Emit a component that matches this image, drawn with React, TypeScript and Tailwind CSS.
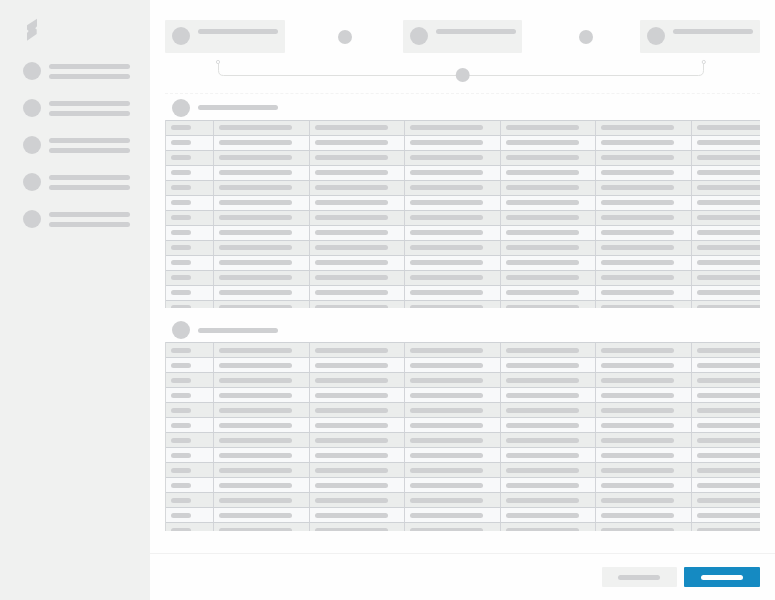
const navItems = [0, 1, 2, 3, 4];
const rows = Array.from({ length: 13 }, (_, i) => i);
const columns = [0, 1, 2, 3, 4, 5];

function Dot() {
  return <div className="size-[18px] shrink-0 rounded-full bg-[#cfd0d2]" />;
}

function Card() {
  return (
    <div className="flex h-[33px] gap-2 rounded-[1px] bg-[#f0f1f0] pt-[7px] pl-[6.6px]">
      <Dot />
      <div className="mt-[2px] h-[5px] w-[80.5px] rounded-full bg-[#cfd0d2]" />
    </div>
  );
}

function StepDot() {
  return <div className="mt-[10px] size-[14px] rounded-full bg-[#cfd0d2]" />;
}

function Connector() {
  return (
    <svg className="block h-[32px] w-[595px]" viewBox="165 57 595 32" fill="none">
      <path d="M218.5 64V70.5Q218.5 75.5 223.5 75.5H698.5Q703.5 75.5 703.5 70.5V64" stroke="#dfe0df" />
      <circle cx="218" cy="62" r="1.6" fill="#fff" stroke="#cfd0d2" strokeWidth=".8" />
      <circle cx="703.8" cy="62" r="1.6" fill="#fff" stroke="#cfd0d2" strokeWidth=".8" />
      <circle cx="462.7" cy="75" r="7" fill="#cfd0d2" />
    </svg>
  );
}

function Section() {
  return (
    <section>
      <div className="flex h-[18px] items-center gap-2 pl-[6.6px]">
        <Dot />
        <div className="h-[5px] w-[80.5px] rounded-full bg-[#cfd0d2]" />
      </div>
      <div className="mt-[3px] h-[188.5px] w-[595px] overflow-hidden border-l border-[#d6d8da]">
        {rows.map((row) => (
          <div
            key={row}
            className="flex h-[15px] w-[640px] border-t border-[#cfd2d6] odd:bg-[#ebedec] even:bg-[#f8f9fa]"
          >
            <div className="flex w-[48px] shrink-0 items-center border-r border-[#d2d4d8] pl-[5px]">
              <div className="h-[5px] w-[19.5px] rounded-full bg-[#cfd0d2]" />
            </div>
            {columns.map((column) => (
              <div
                key={column}
                className="flex w-[95.5px] shrink-0 items-center border-r border-[#d2d4d8] pl-[5px]"
              >
                <div className="h-[5px] w-[73px] rounded-full bg-[#cfd0d2]" />
              </div>
            ))}
          </div>
        ))}
      </div>
    </section>
  );
}

export default function App() {
  return (
    <div className="flex h-[600px] w-[775px] overflow-hidden bg-[#fefefe]">
      <aside className="w-[150px] shrink-0 bg-[#f0f1f0]">
        <svg className="mt-[18px] ml-[26px] block h-[24px] w-[12px]" viewBox="26 18 12 24">
          <path
            d="M37 18.8V26.2L35.2 28.2L36.7 29.5V34L27 40.7V33L28.7 31L27 29.5V25.3Z"
            fill="#cfd0d2"
          />
        </svg>
        <nav className="mt-5 flex flex-col gap-[19px] pl-[23px]">
          {navItems.map((item) => (
            <div key={item} className="flex h-[18px] items-center gap-2">
              <Dot />
              <div className="flex flex-col gap-[5px]">
                <div className="h-[5px] w-[81px] rounded-full bg-[#cfd0d2]" />
                <div className="h-[5px] w-[81px] rounded-full bg-[#cfd0d2]" />
              </div>
            </div>
          ))}
        </nav>
      </aside>
      <main className="flex min-w-0 flex-1 flex-col">
        <div className="h-[553px] pt-5 pl-[15px]">
          <div className="grid h-[37px] w-[595px] grid-cols-[120px_118px_119px_118px_120px]">
            <Card />
            <div className="pl-[53px]">
              <StepDot />
            </div>
            <Card />
            <div className="pl-[57px]">
              <StepDot />
            </div>
            <Card />
          </div>
          <Connector />
          <div className="mt-1 w-[595px] border-t border-dashed border-[#f3f3f3]" />
          <div className="mt-[4.5px] flex flex-col gap-[13.4px]">
            <Section />
            <Section />
          </div>
        </div>
        <footer className="flex h-[47px] justify-end gap-[7px] border-t border-[#f1f1f1] pt-[13px] pr-[15px]">
          <div className="flex h-5 w-[75.5px] items-center justify-center rounded-[1px] bg-[#f0f1f0]">
            <div className="h-[5px] w-[42px] rounded-full bg-[#cfd0d2]" />
          </div>
          <div className="flex h-5 w-[76px] items-center justify-center rounded-[1px] bg-[#158ac2]">
            <div className="h-[5px] w-[42px] rounded-full bg-[#fefefe]" />
          </div>
        </footer>
      </main>
    </div>
  );
}
